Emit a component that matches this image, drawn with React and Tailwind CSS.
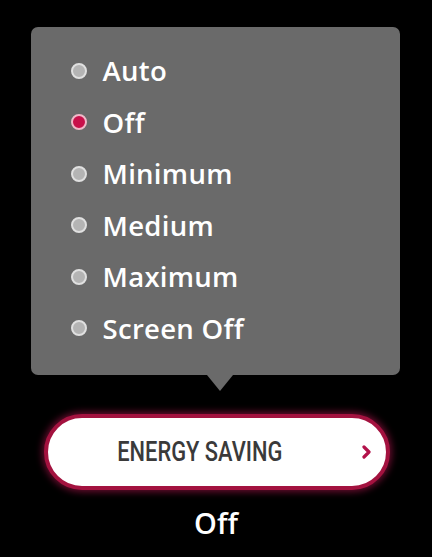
export default function App() {
  const items = ["Auto", "Off", "Minimum", "Medium", "Maximum", "Screen Off"];
  const selected = "Off";

  return (
    <div className="w-[432px] h-[557px] bg-black overflow-hidden flex flex-col items-center" style={{ fontFamily: "'Open Sans', Lato, sans-serif" }}>
      {/* popup */}
      <div className="relative mt-[27px] ml-[-2px] w-[369px] h-[348px] bg-[#6a6a6a] rounded-[7px] pt-[18px] pl-[40px]">
        <ul className="flex flex-col">
          {items.map((it) => (
            <li key={it} className="h-[51.5px] flex items-center gap-[16px]">
              {it === selected ? (
                <span className="w-[16px] h-[16px] rounded-full bg-[#c8104a] border-2 border-[#f0b8c8] shrink-0" />
              ) : (
                <span className="w-[16px] h-[16px] rounded-full bg-[#b4b4b4] border-2 border-[#e0e0e0] shrink-0" />
              )}
              <span className="text-white text-[27.5px] font-semibold leading-none tracking-[0.3px]">{it}</span>
            </li>
          ))}
        </ul>
        <div className="absolute left-[176px] bottom-[-16px] w-0 h-0 border-l-[13px] border-r-[13px] border-t-[16px] border-l-transparent border-r-transparent border-t-[#6a6a6a]" />
      </div>

      {/* button */}
      <div className="mt-[39px] ml-[1px] w-[346px] h-[76px] rounded-full bg-white border-[4px] border-[#a3123f] shadow-[0_0_7px_2px_rgba(160,20,70,0.65)] relative flex items-center justify-center">
        <span className="text-[#3a3a3a] text-[28px] font-medium mr-[34px] scale-x-[0.78] inline-block whitespace-nowrap" style={{ fontFamily: "Roboto, sans-serif" }}>
          ENERGY SAVING
        </span>
        <svg className="absolute right-[14px] top-1/2 -translate-y-1/2" width="10" height="14" viewBox="0 0 10 14">
          <path d="M2 2 L7 7 L2 12" stroke="#b3124a" strokeWidth="3.2" fill="none" strokeLinecap="round" strokeLinejoin="round" />
        </svg>
      </div>

      <div className="mt-[18px] text-white text-[29px] font-semibold leading-none">Off</div>
    </div>
  );
}
